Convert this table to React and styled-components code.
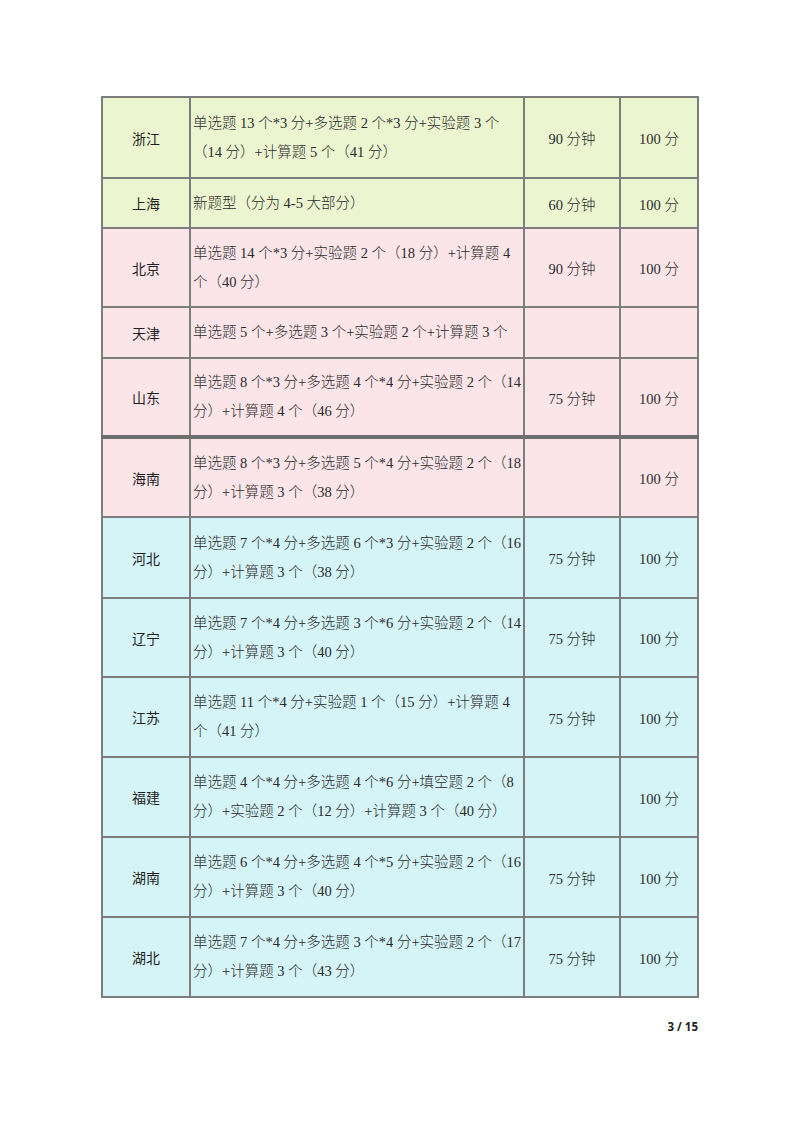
import React from "react";
import styled, { createGlobalStyle } from "styled-components";

const GlobalStyle = createGlobalStyle`
  html, body {
    margin: 0;
    padding: 0;
    background: #ffffff;
  }
`;

const COLORS = {
  green: "#ebf5d0",
  pink: "#fce5e9",
  blue: "#d4f4f8",
};

const rows = [
  { name: "浙江", tone: "green", h: 81, lines: ["单选题 13 个*3 分+多选题 2 个*3 分+实验题 3 个", "（14 分）+计算题 5 个（41 分）"], time: "90 分钟", score: "100 分" },
  { name: "上海", tone: "green", h: 50, lines: ["新题型（分为 4-5 大部分）"], time: "60 分钟", score: "100 分" },
  { name: "北京", tone: "pink", h: 79, lines: ["单选题 14 个*3 分+实验题 2 个（18 分）+计算题 4", "个（40 分）"], time: "90 分钟", score: "100 分" },
  { name: "天津", tone: "pink", h: 51, lines: ["单选题 5 个+多选题 3 个+实验题 2 个+计算题 3 个"], time: "", score: "" },
  { name: "山东", tone: "pink", h: 79, lines: ["单选题 8 个*3 分+多选题 4 个*4 分+实验题 2 个（14", "分）+计算题 4 个（46 分）"], time: "75 分钟", score: "100 分" },
  { name: "海南", tone: "pink", h: 80, thick: true, lines: ["单选题 8 个*3 分+多选题 5 个*4 分+实验题 2 个（18", "分）+计算题 3 个（38 分）"], time: "", score: "100 分" },
  { name: "河北", tone: "blue", h: 81, lines: ["单选题 7 个*4 分+多选题 6 个*3 分+实验题 2 个（16", "分）+计算题 3 个（38 分）"], time: "75 分钟", score: "100 分" },
  { name: "辽宁", tone: "blue", h: 79, lines: ["单选题 7 个*4 分+多选题 3 个*6 分+实验题 2 个（14", "分）+计算题 3 个（40 分）"], time: "75 分钟", score: "100 分" },
  { name: "江苏", tone: "blue", h: 80, lines: ["单选题 11 个*4 分+实验题 1 个（15 分）+计算题 4", "个（41 分）"], time: "75 分钟", score: "100 分" },
  { name: "福建", tone: "blue", h: 80, lines: ["单选题 4 个*4 分+多选题 4 个*6 分+填空题 2 个（8", "分）+实验题 2 个（12 分）+计算题 3 个（40 分）"], time: "", score: "100 分" },
  { name: "湖南", tone: "blue", h: 80, lines: ["单选题 6 个*4 分+多选题 4 个*5 分+实验题 2 个（16", "分）+计算题 3 个（40 分）"], time: "75 分钟", score: "100 分" },
  { name: "湖北", tone: "blue", h: 80, lines: ["单选题 7 个*4 分+多选题 3 个*4 分+实验题 2 个（17", "分）+计算题 3 个（43 分）"], time: "75 分钟", score: "100 分" },
];

export default function App() {
  return (
    <Page>
      <GlobalStyle />
      <Sheet>
        <ExamTable>
          <colgroup>
            <col style={{ width: 88 }} />
            <col style={{ width: 334 }} />
            <col style={{ width: 96 }} />
            <col style={{ width: 78 }} />
          </colgroup>
          <tbody>
            {rows.map((row, index) => (
              <Row key={index} $tone={row.tone} $thick={row.thick} style={{ height: row.h }}>
                <NameCell>{row.name}</NameCell>
                <TextCell>
                  {row.lines.map((line, i) => (
                    <Line key={i}>{line}</Line>
                  ))}
                </TextCell>
                <ValueCell>{row.time}</ValueCell>
                <ValueCell>{row.score}</ValueCell>
              </Row>
            ))}
          </tbody>
        </ExamTable>
        <PageNumber>3 / 15</PageNumber>
      </Sheet>
    </Page>
  );
}

// styled components
const Page = styled.div`
  width: 794px;
  min-height: 1122px;
  background: #ffffff;
  padding-top: 96px;
  box-sizing: border-box;
`;

const Sheet = styled.div`
  width: 597px;
  margin-left: 101px;
  display: flex;
  flex-direction: column;
`;

const ExamTable = styled.table`
  width: 597px;
  table-layout: fixed;
  border-collapse: collapse;
  border: 2px solid #7d7d7d;
`;

const Row = styled.tr`
  background: ${(props) => COLORS[props.$tone]};
  border-top: ${(props) => (props.$thick ? "4px solid #6e6e6e" : "2px solid #7d7d7d")};
`;

const Cell = styled.td`
  border-left: 2px solid #7d7d7d;
  border-right: 2px solid #7d7d7d;
  padding: 0;
  vertical-align: middle;
  color: #2b2b2b;
`;

const NameCell = styled(Cell)`
  text-align: center;
  font-family: "Noto Sans CJK SC", "Noto Sans", sans-serif;
  font-weight: 400;
  font-size: 14px;
  color: #1f1f1f;
`;

const TextCell = styled(Cell)`
  padding-left: 2px;
  font-family: "Liberation Serif", "Noto Sans CJK SC", serif;
  font-weight: 300;
  font-size: 14.5px;
  line-height: 29px;
`;

const Line = styled.div`
  white-space: nowrap;
`;

const ValueCell = styled(Cell)`
  text-align: center;
  font-family: "Liberation Serif", "Noto Sans CJK SC", serif;
  font-weight: 300;
  font-size: 14.5px;
`;

const PageNumber = styled.div`
  align-self: flex-end;
  margin-top: 21px;
  font-family: "Open Sans", "Liberation Sans", sans-serif;
  font-weight: 700;
  font-size: 11.5px;
  color: #222222;
`;
